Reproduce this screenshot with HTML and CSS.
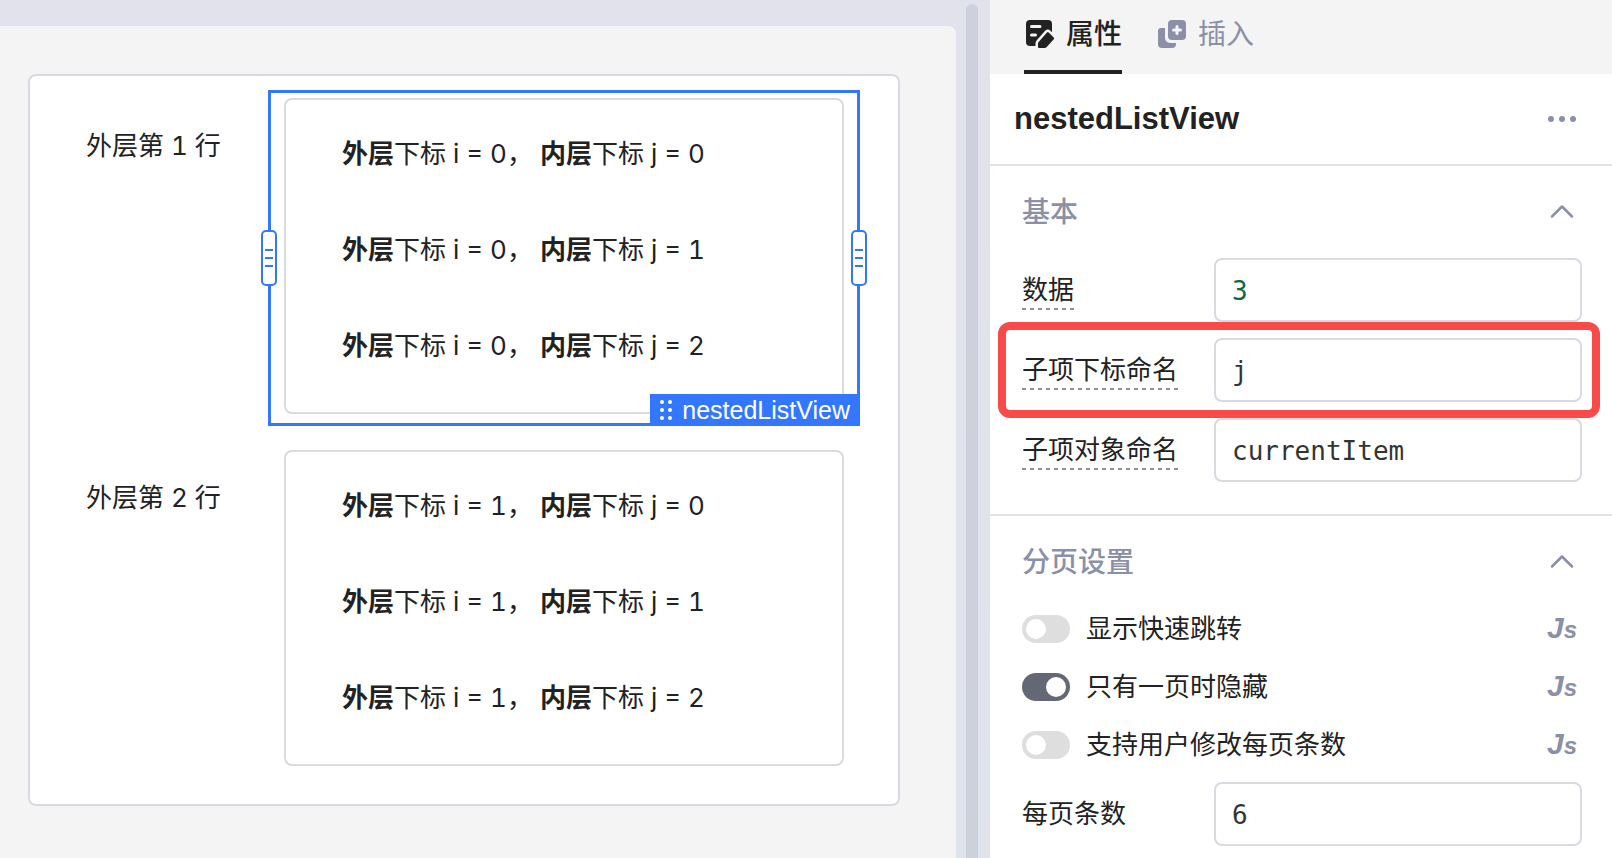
FILE: index.html
```
<!DOCTYPE html>
<html lang="zh-CN">
<head>
<meta charset="utf-8">
<title>nestedListView</title>
<link rel="stylesheet" href="styles.css">
</head>
<body>
<div class="app">
  <main class="stage">
    <div class="canvas">
      <div class="list">
        <section class="outer-row">
          <p class="outer-label">外层第 1 行</p>
          <div class="nested">
            <p class="item"><b>外层</b>下标 i = 0， <b>内层</b>下标 j = 0</p>
            <p class="item"><b>外层</b>下标 i = 0， <b>内层</b>下标 j = 1</p>
            <p class="item"><b>外层</b>下标 i = 0， <b>内层</b>下标 j = 2</p>
            <div class="selection">
              <span class="handle handle-left"><i></i><i></i><i></i></span>
              <span class="handle handle-right"><i></i><i></i><i></i></span>
              <span class="tag">
                <svg class="grip" viewBox="0 0 12 20" aria-hidden="true"><circle cx="2" cy="2" r="2"/><circle cx="10" cy="2" r="2"/><circle cx="2" cy="10" r="2"/><circle cx="10" cy="10" r="2"/><circle cx="2" cy="18" r="2"/><circle cx="10" cy="18" r="2"/></svg>
                nestedListView
              </span>
            </div>
          </div>
        </section>
        <section class="outer-row">
          <p class="outer-label">外层第 2 行</p>
          <div class="nested">
            <p class="item"><b>外层</b>下标 i = 1， <b>内层</b>下标 j = 0</p>
            <p class="item"><b>外层</b>下标 i = 1， <b>内层</b>下标 j = 1</p>
            <p class="item"><b>外层</b>下标 i = 1， <b>内层</b>下标 j = 2</p>
          </div>
        </section>
      </div>
    </div>
    <div class="scroll-track"><div class="scroll-thumb"></div></div>
  </main>

  <aside class="panel">
    <nav class="tabs">
      <button class="tab tab-active" type="button">
        <svg class="tab-icon" viewBox="0 0 32 32" aria-hidden="true">
          <path fill="currentColor" d="M6 2h18a4 4 0 0 1 4 4v10L14 28H6a4 4 0 0 1-4-4V6a4 4 0 0 1 4-4z"/>
          <path stroke="#f4f4f4" stroke-width="3" stroke-linecap="round" d="M7.500 8.500h8.500M7.500 17h4"/>
          <path fill="currentColor" stroke="#f4f4f4" stroke-width="5" stroke-linejoin="round" paint-order="stroke" d="M23 14.500q.8-.9 1.700 0l5 5q.8.8.1 1.700L22.500 29.200q-.7.800-1.700.800H15q-1 0-1-1v-3.500q0-.9.600-1.500z"/>
        </svg>
        属性
      </button>
      <button class="tab" type="button">
        <svg class="tab-icon" viewBox="0 0 32 32" aria-hidden="true">
          <path fill="currentColor" d="M5 10h4v10a5 5 0 0 0 5 5h6v1a4 4 0 0 1-4 4H6a4 4 0 0 1-4-4V13a3 3 0 0 1 3-3z"/>
          <rect x="12" y="2" width="18" height="20" rx="4" fill="currentColor"/>
          <path stroke="#f4f4f4" stroke-width="3" stroke-linecap="round" d="M21 8.500v7M17.500 12h7"/>
        </svg>
        插入
      </button>
    </nav>

    <header class="title-bar">
      <h1 class="title">nestedListView</h1>
      <button class="icon-button" type="button" aria-label="更多">
        <svg class="icon" viewBox="0 0 32 32" aria-hidden="true"><g fill="currentColor"><circle cx="5" cy="16" r="3"/><circle cx="16" cy="16" r="3"/><circle cx="27" cy="16" r="3"/></g></svg>
      </button>
    </header>

    <section class="group">
      <div class="group-head">
        <h2 class="group-title">基本</h2>
        <button class="icon-button" type="button" aria-label="收起基本">
          <svg class="icon" viewBox="0 0 32 32" aria-hidden="true"><path fill="none" stroke="currentColor" stroke-width="2.500" stroke-linecap="round" stroke-linejoin="round" d="M6 20.500L16 10.500l10 10"/></svg>
        </button>
      </div>
      <div class="field">
        <span class="field-name"><label class="hint" for="data">数据</label></span>
        <input class="input input-number" id="data" type="text" value="3">
      </div>
      <div class="field field-marked">
        <span class="field-name"><label class="hint" for="index-name">子项下标命名</label></span>
        <input class="input" id="index-name" type="text" value="j">
      </div>
      <div class="field">
        <span class="field-name"><label class="hint" for="item-name">子项对象命名</label></span>
        <input class="input" id="item-name" type="text" value="currentItem">
      </div>
    </section>

    <section class="group">
      <div class="group-head">
        <h2 class="group-title">分页设置</h2>
        <button class="icon-button" type="button" aria-label="收起分页设置">
          <svg class="icon" viewBox="0 0 32 32" aria-hidden="true"><path fill="none" stroke="currentColor" stroke-width="2.500" stroke-linecap="round" stroke-linejoin="round" d="M6 20.500L16 10.500l10 10"/></svg>
        </button>
      </div>
      <div class="switch-row">
        <input class="switch" id="quick-jump" type="checkbox">
        <label class="switch-label" for="quick-jump">显示快速跳转</label>
        <button class="js-button" type="button">J<span class="js-small">s</span></button>
      </div>
      <div class="switch-row">
        <input class="switch" id="hide-single" type="checkbox" checked>
        <label class="switch-label" for="hide-single">只有一页时隐藏</label>
        <button class="js-button" type="button">J<span class="js-small">s</span></button>
      </div>
      <div class="switch-row">
        <input class="switch" id="change-size" type="checkbox">
        <label class="switch-label" for="change-size">支持用户修改每页条数</label>
        <button class="js-button" type="button">J<span class="js-small">s</span></button>
      </div>
      <div class="field">
        <span class="field-name"><label for="page-size">每页条数</label></span>
        <input class="input" id="page-size" type="text" value="6">
      </div>
    </section>
  </aside>
</div>
</body>
</html>
```
FILE: styles.css
```
:root {
  --ink: #222222;
  --muted: #8b8fa8;
  --line: #d9d9e2;
  --divider: #e2e2ec;
  --blue: #3377ff;
  --sans: Inter, "Noto Sans CJK SC", sans-serif;
  --latin: "Liberation Sans", sans-serif;
}

* { box-sizing: border-box; }

body {
  margin: 0;
  color: var(--ink);
  font: 26px/40px var(--sans);
  font-variant-numeric: tabular-nums;
}

p, h1, h2 { margin: 0; }

button {
  padding: 0;
  border: 0;
  background: none;
  color: var(--muted);
  font: inherit;
}

.app {
  display: flex;
  min-height: 100vh;
}

/* Canvas */
.stage {
  display: flex;
  flex: 1;
  min-width: 0;
  background: linear-gradient(#e2e2ec, #dfe3ec);
}

.canvas {
  flex: 1;
  margin-top: 26px;
  padding: 48px 56px 48px 28px;
  border-top-right-radius: 8px;
  background: #f4f4f4;
}

.scroll-track {
  display: flex;
  width: 34px;
  padding: 4px 12px 0 10px;
}

.scroll-thumb {
  flex: 1;
  border-radius: 6px 6px 0 0;
  background: linear-gradient(#cfd0de, #cdd1db);
}

.list {
  display: flex;
  flex-direction: column;
  gap: 36px;
  padding: 22px 54px 38px 56px;
  border: 2px solid var(--line);
  border-radius: 8px;
  background: #fff;
}

.outer-row {
  display: grid;
  grid-template-columns: 198px 1fr;
}

.outer-label { padding-top: 28px; }

.nested {
  position: relative;
  padding: 6px 56px 18px;
  border: 2px solid var(--line);
  border-radius: 8px;
}

.item {
  line-height: 96px;
  white-space: pre;
}

.item b { font-weight: 600; }

.selection {
  position: absolute;
  inset: -10px -18px -14px;
  border: 3px solid var(--blue);
}

.handle {
  position: absolute;
  top: 137px;
  display: flex;
  flex-direction: column;
  align-items: center;
  justify-content: center;
  gap: 6px;
  width: 16px;
  height: 56px;
  border: 2px solid var(--blue);
  border-radius: 5px;
  background: #fff;
}

.handle-left { left: -10px; }
.handle-right { right: -10px; }

.handle i {
  width: 8px;
  height: 2px;
  background: var(--blue);
}

.tag {
  position: absolute;
  right: -3px;
  bottom: -3px;
  display: flex;
  align-items: center;
  gap: 10px;
  height: 32px;
  padding: 0 10px;
  background: var(--blue);
  color: #fff;
  font: 25px/32px var(--latin);
}

.grip {
  width: 12px;
  height: 20px;
  fill: currentColor;
}

/* Property panel */
.panel {
  width: 622px;
  background: #fff;
}

.tabs {
  display: flex;
  gap: 34px;
  height: 74px;
  padding-left: 34px;
  background: #f4f4f4;
}

.tab {
  display: flex;
  align-items: center;
  gap: 10px;
  padding-bottom: 2px;
  border-bottom: 4px solid transparent;
  font-size: 28px;
}

.tab-active {
  border-color: var(--ink);
  color: var(--ink);
  font-weight: 500;
}

.tab-icon {
  width: 32px;
  height: 32px;
}

.title-bar {
  display: flex;
  align-items: center;
  justify-content: space-between;
  height: 92px;
  padding: 0 34px 0 24px;
  border-bottom: 2px solid var(--divider);
}

.title {
  font: bold 31px/40px var(--latin);
}

.icon-button {
  display: flex;
}

.icon {
  width: 32px;
  height: 32px;
}

.group {
  display: flex;
  flex-direction: column;
  gap: 16px;
  padding: 26px 30px 32px 32px;
  border-bottom: 2px solid var(--divider);
}

.group:last-child {
  padding-bottom: 12px;
  border-bottom: 0;
}

.group-head {
  display: flex;
  align-items: center;
  justify-content: space-between;
  margin-bottom: 10px;
  padding-right: 4px;
}

.group-title {
  color: var(--muted);
  font-size: 28px;
  font-weight: 500;
}

.field {
  position: relative;
  display: flex;
  align-items: center;
}

.field-name { width: 192px; }

.hint {
  display: inline-block;
  background: repeating-linear-gradient(90deg, var(--muted) 0 4px, transparent 4px 8px) left bottom / 100% 2px no-repeat;
}

.field-marked::after {
  content: "";
  position: absolute;
  inset: -16px -18px -16px -24px;
  border: 8px solid #f84a48;
  border-radius: 12px;
  pointer-events: none;
}

.input {
  flex: 1;
  min-width: 0;
  height: 64px;
  padding: 2px 16px 0;
  border: 2px solid var(--line);
  border-radius: 8px;
  background: #fff;
  color: #333;
  font: 26px/40px "DejaVu Sans Mono", monospace;
}

.input-number { color: #116644; }

.switch-row {
  display: flex;
  align-items: center;
  height: 42px;
  padding-right: 4px;
}

.switch {
  display: flex;
  align-items: center;
  appearance: none;
  width: 48px;
  height: 28px;
  margin: 0 16px 0 0;
  padding: 0 4px;
  border-radius: 14px;
  background: #dedede;
}

.switch::before {
  content: "";
  width: 20px;
  height: 20px;
  border-radius: 50%;
  background: #fff;
}

.switch:checked {
  justify-content: flex-end;
  background: #636776;
}

.switch-label { flex: 1; }

.js-button {
  width: 32px;
  font: italic bold 30px/40px var(--latin);
}

.js-small { font-size: 24px; }
```
